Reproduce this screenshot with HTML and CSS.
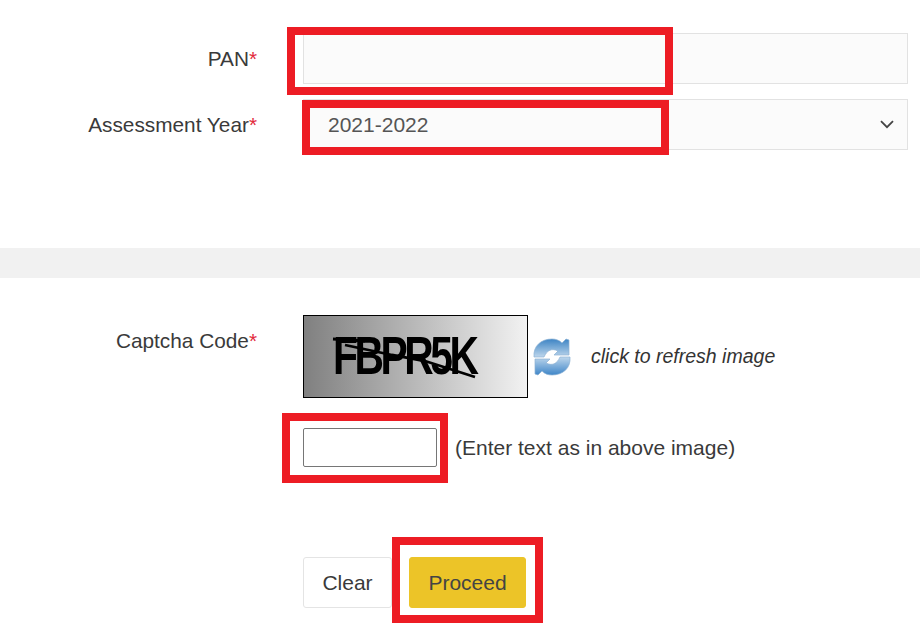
FILE: index.html
```html
<!DOCTYPE html>
<html lang="en">
<head>
<meta charset="utf-8">
<title>Form</title>
<link rel="stylesheet" href="styles.css">
</head>
<body>
<main class="page">
  <section class="fields">
    <div class="row">
      <label class="label">PAN<span class="req">*</span></label>
      <input class="field" type="text">
    </div>
    <div class="row">
      <label class="label">Assessment Year<span class="req">*</span></label>
      <div class="field select">
        <span>2021-2022</span>
        <svg class="chev" width="14" height="9" viewBox="0 0 14 9"><path d="M1 1.2 L7 7.2 L13 1.2" fill="none" stroke="#444" stroke-width="1.8"/></svg>
      </div>
    </div>
  </section>
  <div class="band"></div>
  <section class="captcha">
    <div class="row top">
      <label class="label cap-label">Captcha Code<span class="req">*</span></label>
      <div class="cap-body">
        <div class="cap-line">
          <div class="cap-img">
            <span class="cap-text">FBPR5K</span>
            <svg class="cap-strike" width="225" height="83" viewBox="0 0 225 83"><path d="M30 24 L62 26 M42 30 L89 40 L122 46 L172 62" fill="none" stroke="#000" stroke-width="2.8"/></svg>
          </div>
          <svg class="refresh" width="40" height="42" viewBox="0 0 40 42">
            <defs>
              <linearGradient id="rg" x1="0" y1="0" x2="0" y2="1"><stop offset="0" stop-color="#3d84c4"/><stop offset="1" stop-color="#bdd6ec"/></linearGradient>
              <linearGradient id="rh" x1="0" y1="0" x2="0" y2="1"><stop offset="0" stop-color="#bdd6ec"/><stop offset="1" stop-color="#3f86c8"/></linearGradient>
            </defs>
            <path d="M2 21 C1 10 9 3 20 3 C24 3 27 4 30 7 L34 3 L37 4 L37 19 L22 19 L26 15 C20 12 15 14 12 21 Z" fill="url(#rg)" stroke="#8db2d4" stroke-width=".7"/>
            <path d="M38 21 C39 32 31 39 20 39 C16 39 13 38 10 35 L6 39 L3 38 L3 23 L18 23 L14 27 C20 30 25 28 28 21 Z" fill="url(#rh)" stroke="#8db2d4" stroke-width=".7"/>
          </svg>
          <em class="hint">click to refresh image</em>
        </div>
        <div class="enter-line">
          <input class="cap-input" type="text">
          <span class="enter-note">(Enter text as in above image)</span>
        </div>
        <div class="actions">
          <button class="btn clear" type="button">Clear</button>
          <button class="btn proceed" type="button">Proceed</button>
        </div>
      </div>
    </div>
  </section>
  <div class="mark m1"></div>
  <div class="mark m2"></div>
  <div class="mark m3"></div>
  <div class="mark m4"></div>
</main>
</body>
</html>
```
FILE: styles.css
```css
* { box-sizing: border-box; }
html, body { margin: 0; height: 100%; background: #fff; overflow: hidden; }
body { font-family: "Liberation Sans", Arial, sans-serif; font-size: 21px; color: #3a3a3a; }
.page { position: relative; width: 920px; height: 638px; }
.fields { padding: 33px 12px 0 0; height: 248px; display: flex; flex-direction: column; gap: 15px; }
.row { display: grid; grid-template-columns: 257px 1fr; column-gap: 46px; align-items: center; }
.row.top { align-items: start; }
.label { text-align: right; line-height: 51px; font-size: 20.8px; }
.req { color: #e22a3c; }
.field { height: 51px; width: 100%; background: #fbfbfb; border: 1px solid #e2e2e2; font: inherit; color: #555; padding: 0 24px; }
.select { display: flex; align-items: center; justify-content: space-between; padding-right: 13px; }
.band { height: 30px; background: #f1f1f1; }
.captcha { padding: 37px 12px 0 0; }
.cap-line { display: flex; align-items: center; }
.cap-img { position: relative; width: 225px; height: 83px; border: 1px solid #000; background: linear-gradient(90deg, #808080, #f2f2f2); overflow: hidden; }
.cap-text { position: absolute; left: 29px; top: 13px; font-size: 53px; font-weight: bold; line-height: 54px; letter-spacing: -4.5px; color: #000; transform: scaleX(.77); transform-origin: left; filter: blur(.3px); }
.cap-strike { position: absolute; left: -1px; top: -1px; }
.refresh { margin: 0 0 0 4px; display: block; filter: blur(.5px); }
.hint { margin-left: 19px; font-size: 19.5px; color: #333; }
.enter-line { display: flex; align-items: center; margin-top: 30px; }
.cap-input { width: 134px; height: 39px; background: #fff; border: 1px solid #767676; border-radius: 2px; }
.enter-note { margin-left: 18px; }
.actions { display: flex; gap: 17px; margin-top: 90px; }
.btn { height: 51px; font: inherit; color: #3a3a3a; border-radius: 3px; padding: 0; }
.clear { width: 89px; background: #fff; border: 1px solid #e4e4e4; }
.proceed { width: 117px; background: #ecc428; border: 1px solid #ecc428; color: #444; }
.mark { position: absolute; border: 8px solid #ed1c24; pointer-events: none; }
.m1 { left: 287px; top: 27px; width: 386px; height: 68px; }
.m2 { left: 302px; top: 100px; width: 367px; height: 55px; }
.m3 { left: 282px; top: 413px; width: 166px; height: 70px; }
.m4 { left: 392px; top: 537px; width: 151px; height: 86px; }
```
